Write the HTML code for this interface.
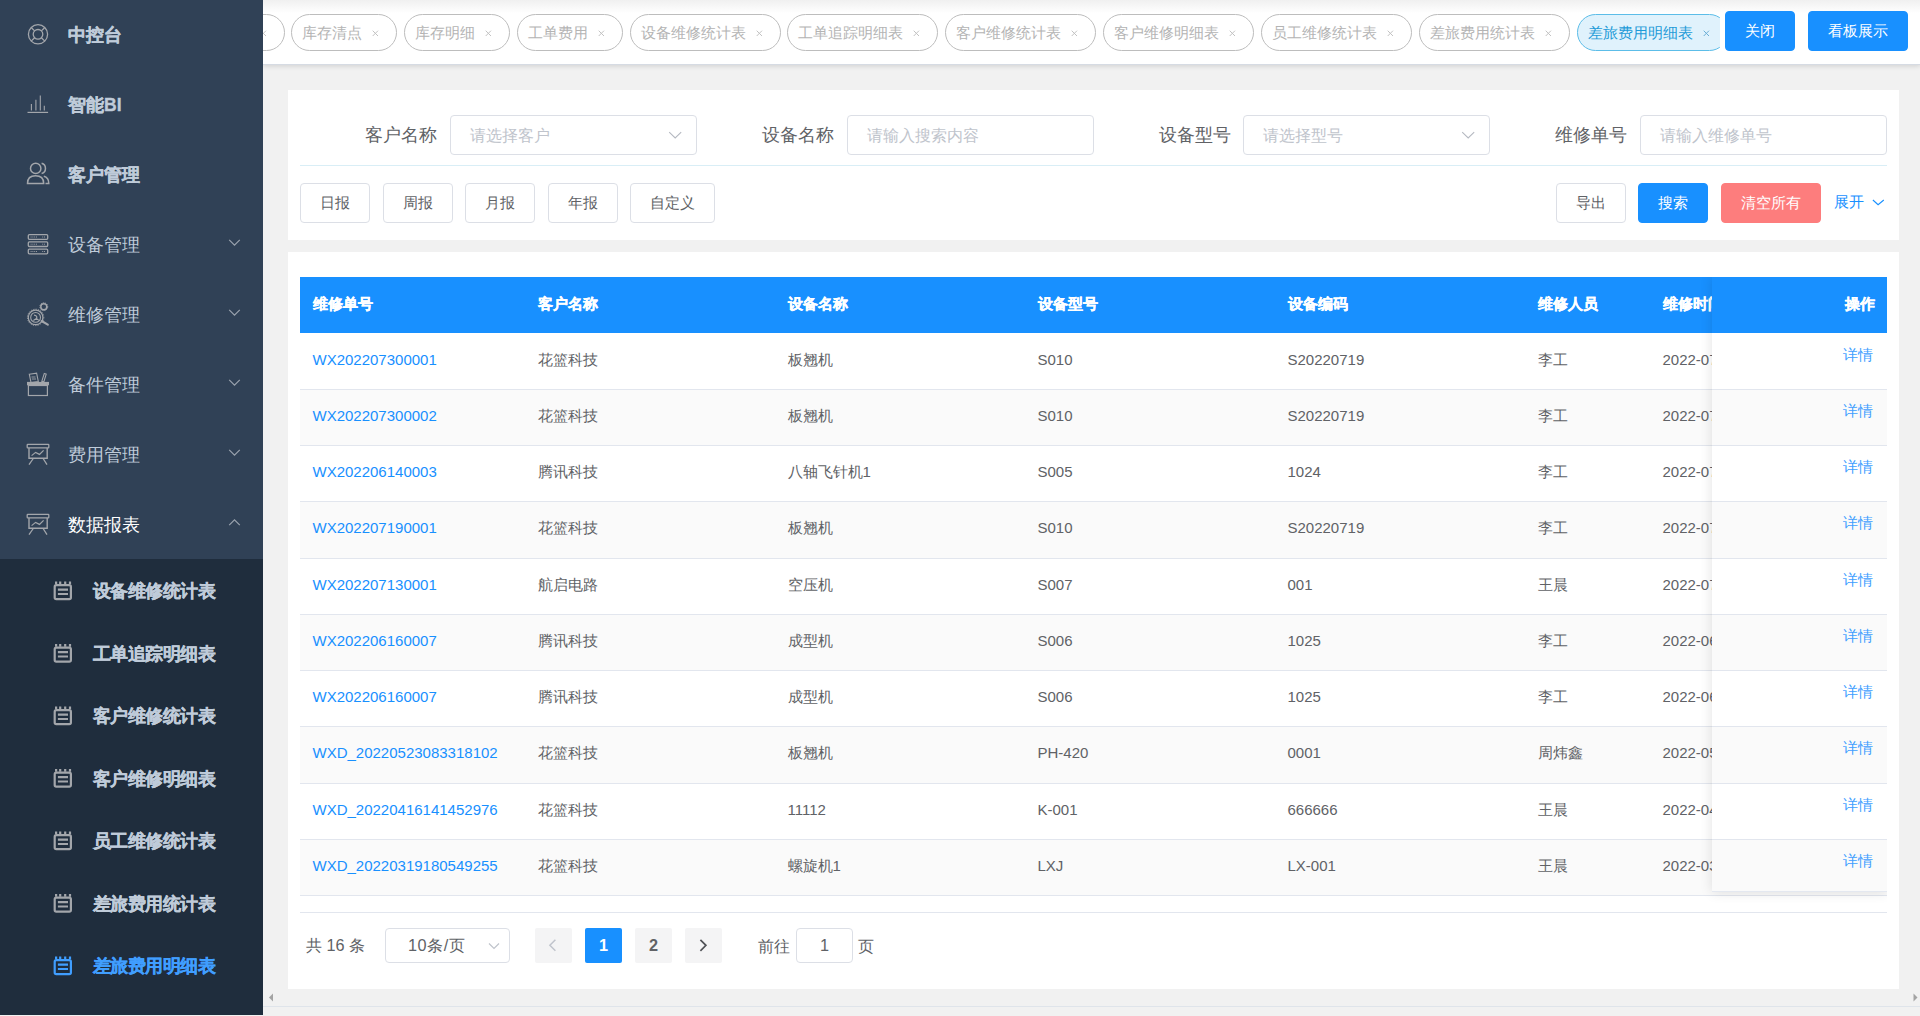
<!DOCTYPE html>
<html><head><meta charset="utf-8">
<style>
*{box-sizing:border-box;margin:0;padding:0}
html,body{width:1920px;height:1016px;overflow:hidden;background:#f1f1f1;font-family:"Liberation Sans",sans-serif;}
.ab{position:absolute;white-space:nowrap}
#side{position:absolute;left:0;top:0;width:263px;height:1015px;background:#304156;overflow:hidden;z-index:5}
.mt{position:absolute;left:68px;font-size:17.5px;color:#bfcbd9;white-space:nowrap;line-height:70px;height:70px}
.st{position:absolute;left:93px;font-size:17.5px;letter-spacing:-0.55px;font-weight:bold;-webkit-text-stroke:0.3px currentColor;color:#bfcbd9;white-space:nowrap;line-height:62.5px;height:62.5px}
#tagbar{position:absolute;left:263px;top:0;width:1657px;height:64px;background:#fff;box-shadow:0 1px 0 #d6dbe3,0 2px 5px rgba(0,0,0,.14);overflow:hidden}
.tag{position:absolute;top:14px;height:37px;border:1px solid #bdbdbd;border-radius:18.5px;font-size:15px;color:#b4b4b4;line-height:35px;white-space:nowrap;background:#fff}
.tag .tx{position:absolute;left:10px;top:0}
.tag .x{position:absolute;right:14px;top:0;font-size:14px}
.btn{position:absolute;border-radius:4px;font-size:15px;text-align:center;border:1px solid #dcdfe6;color:#606266;background:#fff;white-space:nowrap}
.pb{background:#1890ff;border-color:#1890ff;color:#fff}
.panel{position:absolute;background:#fff}
.lbl{position:absolute;font-size:17.5px;color:#606266;line-height:40px;white-space:nowrap}
.inp{position:absolute;height:40px;border:1px solid #dcdfe6;border-radius:4px;background:#fff}
.inp .ph{position:absolute;left:19px;top:0;line-height:38px;font-size:16.25px;color:#c0c4cc;white-space:nowrap}
.th{position:absolute;top:276px;height:56px;line-height:56px;font-size:15px;font-weight:bold;-webkit-text-stroke:0.3px currentColor;color:#fff;white-space:nowrap}
.td{position:absolute;height:56px;line-height:54px;font-size:15px;color:#606266;white-space:nowrap}
.lnk{color:#1890ff}
</style></head><body>

<div id="side">
<div class="mt" style="top:0px;font-weight:bold;-webkit-text-stroke:0.35px currentColor;">中控台</div>
<div class="mt" style="top:70px;font-weight:bold;-webkit-text-stroke:0.35px currentColor;">智能BI</div>
<div class="mt" style="top:140px;font-weight:bold;-webkit-text-stroke:0.35px currentColor;">客户管理</div>
<div class="mt" style="top:210px;">设备管理</div>
<div class="mt" style="top:280px;">维修管理</div>
<div class="mt" style="top:350px;">备件管理</div>
<div class="mt" style="top:420px;">费用管理</div>
<div class="mt" style="top:490px;color:#fff;">数据报表</div>
<div class="ab" style="left:0;top:559px;width:263px;height:456px;background:#1f2d3d"></div>
<div class="st" style="top:560.10px;">设备维修统计表</div>
<div class="st" style="top:622.60px;">工单追踪明细表</div>
<div class="st" style="top:685.10px;">客户维修统计表</div>
<div class="st" style="top:747.60px;">客户维修明细表</div>
<div class="st" style="top:810.10px;">员工维修统计表</div>
<div class="st" style="top:872.60px;">差旅费用统计表</div>
<div class="st" style="top:935.10px;color:#409eff;">差旅费用明细表</div>
<svg class="ab" style="left:0;top:0" width="263" height="1015" viewBox="0 0 263 1015" fill="none" stroke="#a3a6ab"><circle cx="38" cy="34.3" r="9.6" stroke-width="1.3"/><circle cx="38" cy="34.3" r="4.8" stroke-width="1.3"/><path d="M31.2 27.5L34.6 30.9M44.8 27.5L41.4 30.9M31.2 41.1L34.6 37.7M44.8 41.1L41.4 37.7" stroke-width="1.3"/><path d="M31.4 104V110.5M35.9 99.8V110.5M40.3 95.6V110.5M44.3 105.7V110.5" stroke-width="1.1"/><path d="M27.5 112.4H48.1" stroke-width="1.2"/><circle cx="35.7" cy="168.4" r="5.2" stroke-width="1.5"/><path d="M41.6 163.3A5.3 5.3 0 0 1 41.6 173.5" stroke-width="1.5"/><path d="M27.5 183.4C27.5 178.5 30.5 175.8 35.5 175.8C40.5 175.8 43.7 178.5 43.7 183.4Z" stroke-width="1.5"/><path d="M43.8 176.2C47 177 48.8 179.5 48.8 183.4H45.5" stroke-width="1.5"/><rect x="28.3" y="234.7" width="19.4" height="4.6" rx="1" stroke-width="1.3"/><path d="M30.6 237.00H37.6M42.2 237.00H45.2" stroke-width="0.9" stroke-dasharray="1 0.8"/><rect x="28.3" y="241.9" width="19.4" height="4.6" rx="1" stroke-width="1.3"/><path d="M30.6 244.20H37.6M42.2 244.20H45.2" stroke-width="0.9" stroke-dasharray="1 0.8"/><rect x="28.3" y="249.2" width="19.4" height="4.6" rx="1" stroke-width="1.3"/><path d="M30.6 251.50H37.6M42.2 251.50H45.2" stroke-width="0.9" stroke-dasharray="1 0.8"/><circle cx="35.6" cy="317.4" r="7.3" stroke-width="1.2"/><circle cx="35.6" cy="317.4" r="8.2" stroke-width="0.9" stroke-dasharray="1.2 1.2"/><circle cx="35.6" cy="317.4" r="4.9" stroke-width="1.1"/><path d="M34 315.2C36.5 315.5 37.5 317 36.4 318.4L33.4 320.6M36.4 318.4L38.8 320.4" stroke-width="1.2"/><path d="M41.6 321L47.8 324.6" stroke-width="2.1" stroke-linecap="round"/><circle cx="43.8" cy="306.7" r="3.0" stroke-width="1.5"/><circle cx="43.8" cy="306.7" r="3.9" stroke-width="1.0" stroke-dasharray="1.2 0.9"/><rect x="28.4" y="385.5" width="19" height="10" stroke-width="1.2"/><path d="M27 383.6H49" stroke-width="3.4"/><path d="M29.3 374.2L36.6 373.2L38.3 381.5L31 382.5Z" stroke-width="1.1"/><path d="M31.5 377H35.5M31.8 379H36" stroke-width="0.9"/><path d="M44.3 373.4L46.2 374.1L43.8 382L41.8 381.3Z" stroke-width="1.1"/><rect x="27.2" y="444.3" width="21.6" height="3.6" rx="0.6" stroke-width="1.3"/><path d="M29 447.9V458.2H47.2V447.9" stroke-width="1.4"/><path d="M31.6 455.6L35.6 452.4L39.5 454.4L43.6 450.3" stroke-width="1.2"/><path d="M33.3 458.5L29 464.7M43.1 458.5L47 464.7" stroke-width="1.3"/><rect x="27.2" y="514.3" width="21.6" height="3.6" rx="0.6" stroke-width="1.3"/><path d="M29 517.9V528.2H47.2V517.9" stroke-width="1.4"/><path d="M31.6 525.6L35.6 522.4L39.5 524.4L43.6 520.3" stroke-width="1.2"/><path d="M33.3 528.5L29 534.7M43.1 528.5L47 534.7" stroke-width="1.3"/><g stroke="#a3a6ab" transform="translate(53.6 581.30)"><rect x="1.1" y="3.9" width="16.2" height="14" rx="1.6" stroke-width="2.2"/><path d="M2.5 0.2V3M6.6 0.2V3M11.6 0.2V3M16.4 0.2V3" stroke-width="2.2"/><path d="M4.3 8.4H14.4M4.3 12.7H14.4" stroke-width="2.2"/></g><g stroke="#a3a6ab" transform="translate(53.6 643.80)"><rect x="1.1" y="3.9" width="16.2" height="14" rx="1.6" stroke-width="2.2"/><path d="M2.5 0.2V3M6.6 0.2V3M11.6 0.2V3M16.4 0.2V3" stroke-width="2.2"/><path d="M4.3 8.4H14.4M4.3 12.7H14.4" stroke-width="2.2"/></g><g stroke="#a3a6ab" transform="translate(53.6 706.30)"><rect x="1.1" y="3.9" width="16.2" height="14" rx="1.6" stroke-width="2.2"/><path d="M2.5 0.2V3M6.6 0.2V3M11.6 0.2V3M16.4 0.2V3" stroke-width="2.2"/><path d="M4.3 8.4H14.4M4.3 12.7H14.4" stroke-width="2.2"/></g><g stroke="#a3a6ab" transform="translate(53.6 768.80)"><rect x="1.1" y="3.9" width="16.2" height="14" rx="1.6" stroke-width="2.2"/><path d="M2.5 0.2V3M6.6 0.2V3M11.6 0.2V3M16.4 0.2V3" stroke-width="2.2"/><path d="M4.3 8.4H14.4M4.3 12.7H14.4" stroke-width="2.2"/></g><g stroke="#a3a6ab" transform="translate(53.6 831.30)"><rect x="1.1" y="3.9" width="16.2" height="14" rx="1.6" stroke-width="2.2"/><path d="M2.5 0.2V3M6.6 0.2V3M11.6 0.2V3M16.4 0.2V3" stroke-width="2.2"/><path d="M4.3 8.4H14.4M4.3 12.7H14.4" stroke-width="2.2"/></g><g stroke="#a3a6ab" transform="translate(53.6 893.80)"><rect x="1.1" y="3.9" width="16.2" height="14" rx="1.6" stroke-width="2.2"/><path d="M2.5 0.2V3M6.6 0.2V3M11.6 0.2V3M16.4 0.2V3" stroke-width="2.2"/><path d="M4.3 8.4H14.4M4.3 12.7H14.4" stroke-width="2.2"/></g><g stroke="#409eff" transform="translate(53.6 956.30)"><rect x="1.1" y="3.9" width="16.2" height="14" rx="1.6" stroke-width="2.2"/><path d="M2.5 0.2V3M6.6 0.2V3M11.6 0.2V3M16.4 0.2V3" stroke-width="2.2"/><path d="M4.3 8.4H14.4M4.3 12.7H14.4" stroke-width="2.2"/></g><path d="M229.2 239.9L234.5 245.2L239.8 239.9" stroke="#9aa3ae" stroke-width="1.2"/><path d="M229.2 309.9L234.5 315.2L239.8 309.9" stroke="#9aa3ae" stroke-width="1.2"/><path d="M229.2 379.9L234.5 385.2L239.8 379.9" stroke="#9aa3ae" stroke-width="1.2"/><path d="M229.2 449.9L234.5 455.2L239.8 449.9" stroke="#9aa3ae" stroke-width="1.2"/><path d="M229.2 525.2L234.5 519.9L239.8 525.2" stroke="#9aa3ae" stroke-width="1.2"/></svg>
</div>
<div id="tagbar"><div class="ab" style="left:0;top:0;width:1657px;height:13px;background:linear-gradient(#f0f0f0,rgba(255,255,255,0))"></div><div class="ab" style="left:0;top:0;width:1457px;height:64px;overflow:hidden">
<div class="tag" style="left:-84.5px;width:106px"><svg class="ab" style="right:16.5px;top:15px" width="7" height="7" viewBox="0 0 7 7"><path d="M0.7 0.7L6 6M6 0.7L0.7 6" stroke="#c2c2c2" stroke-width="1"/></svg></div>
<div class="tag" style="left:28.0px;width:105.5px;"><span class="tx">库存清点</span><svg class="ab" style="right:16.5px;top:15px" width="7" height="7" viewBox="0 0 7 7"><path d="M0.7 0.7L6 6M6 0.7L0.7 6" stroke="#c2c2c2" stroke-width="1"/></svg></div>
<div class="tag" style="left:141.0px;width:105.5px;"><span class="tx">库存明细</span><svg class="ab" style="right:16.5px;top:15px" width="7" height="7" viewBox="0 0 7 7"><path d="M0.7 0.7L6 6M6 0.7L0.7 6" stroke="#c2c2c2" stroke-width="1"/></svg></div>
<div class="tag" style="left:254.0px;width:105.5px;"><span class="tx">工单费用</span><svg class="ab" style="right:16.5px;top:15px" width="7" height="7" viewBox="0 0 7 7"><path d="M0.7 0.7L6 6M6 0.7L0.7 6" stroke="#c2c2c2" stroke-width="1"/></svg></div>
<div class="tag" style="left:367.0px;width:150.5px;"><span class="tx">设备维修统计表</span><svg class="ab" style="right:16.5px;top:15px" width="7" height="7" viewBox="0 0 7 7"><path d="M0.7 0.7L6 6M6 0.7L0.7 6" stroke="#c2c2c2" stroke-width="1"/></svg></div>
<div class="tag" style="left:524.0px;width:150.5px;"><span class="tx">工单追踪明细表</span><svg class="ab" style="right:16.5px;top:15px" width="7" height="7" viewBox="0 0 7 7"><path d="M0.7 0.7L6 6M6 0.7L0.7 6" stroke="#c2c2c2" stroke-width="1"/></svg></div>
<div class="tag" style="left:682.0px;width:150.5px;"><span class="tx">客户维修统计表</span><svg class="ab" style="right:16.5px;top:15px" width="7" height="7" viewBox="0 0 7 7"><path d="M0.7 0.7L6 6M6 0.7L0.7 6" stroke="#c2c2c2" stroke-width="1"/></svg></div>
<div class="tag" style="left:840.0px;width:150.5px;"><span class="tx">客户维修明细表</span><svg class="ab" style="right:16.5px;top:15px" width="7" height="7" viewBox="0 0 7 7"><path d="M0.7 0.7L6 6M6 0.7L0.7 6" stroke="#c2c2c2" stroke-width="1"/></svg></div>
<div class="tag" style="left:998.0px;width:150.5px;"><span class="tx">员工维修统计表</span><svg class="ab" style="right:16.5px;top:15px" width="7" height="7" viewBox="0 0 7 7"><path d="M0.7 0.7L6 6M6 0.7L0.7 6" stroke="#c2c2c2" stroke-width="1"/></svg></div>
<div class="tag" style="left:1156.0px;width:150.5px;"><span class="tx">差旅费用统计表</span><svg class="ab" style="right:16.5px;top:15px" width="7" height="7" viewBox="0 0 7 7"><path d="M0.7 0.7L6 6M6 0.7L0.7 6" stroke="#c2c2c2" stroke-width="1"/></svg></div>
<div class="tag" style="left:1314.0px;width:150.5px;background:#e0f2fc;border-color:#5cbde8;color:#1e9bd8;"><span class="tx">差旅费用明细表</span><svg class="ab" style="right:16.5px;top:15px" width="7" height="7" viewBox="0 0 7 7"><path d="M0.7 0.7L6 6M6 0.7L0.7 6" stroke="#6aaed6" stroke-width="1"/></svg></div>
</div></div>
<div class="btn pb" style="left:1725px;top:11px;width:70px;height:40px;line-height:38px">关闭</div>
<div class="btn pb" style="left:1808px;top:11px;width:100px;height:40px;line-height:38px">看板展示</div>
<div class="panel" style="left:288px;top:89.5px;width:1611px;height:150.5px"></div>
<div class="lbl" style="left:365.0px;top:115px">客户名称</div>
<div class="inp" style="left:450.0px;top:115px;width:247px"><span class="ph">请选择客户</span><svg class="ab" style="left:217px;top:13.5px" width="14" height="10" viewBox="0 0 14 10"><path d="M1.2 2.2L7.2 8L13.2 2.2" fill="none" stroke="#b4b8c0" stroke-width="1.05"/></svg></div>
<div class="lbl" style="left:762.0px;top:115px">设备名称</div>
<div class="inp" style="left:847.0px;top:115px;width:247px"><span class="ph">请输入搜索内容</span></div>
<div class="lbl" style="left:1158.5px;top:115px">设备型号</div>
<div class="inp" style="left:1243.0px;top:115px;width:247px"><span class="ph">请选择型号</span><svg class="ab" style="left:217px;top:13.5px" width="14" height="10" viewBox="0 0 14 10"><path d="M1.2 2.2L7.2 8L13.2 2.2" fill="none" stroke="#b4b8c0" stroke-width="1.05"/></svg></div>
<div class="lbl" style="left:1555.0px;top:115px">维修单号</div>
<div class="inp" style="left:1640.0px;top:115px;width:247px"><span class="ph">请输入维修单号</span></div>
<div class="ab" style="left:300px;top:165px;width:1587px;height:1px;background:#d9eef6"></div>
<div class="btn" style="left:300px;top:183px;width:70px;height:40px;line-height:38px">日报</div>
<div class="btn" style="left:383px;top:183px;width:70px;height:40px;line-height:38px">周报</div>
<div class="btn" style="left:465px;top:183px;width:70px;height:40px;line-height:38px">月报</div>
<div class="btn" style="left:548px;top:183px;width:70px;height:40px;line-height:38px">年报</div>
<div class="btn" style="left:630px;top:183px;width:85px;height:40px;line-height:38px">自定义</div>
<div class="btn" style="left:1556px;top:183px;width:70px;height:40px;line-height:38px">导出</div>
<div class="btn pb" style="left:1638px;top:183px;width:70px;height:40px;line-height:38px">搜索</div>
<div class="btn" style="left:1721px;top:183px;width:100px;height:40px;line-height:38px;background:#fd7d7d;border-color:#fd7d7d;color:#fff">清空所有</div>
<div class="ab" style="left:1834px;top:182px;line-height:40px;font-size:15px;color:#1890ff">展开</div>
<svg class="ab" style="left:1871px;top:197px" width="14" height="10" viewBox="0 0 14 10"><path d="M1.9 3L7.1 7.7L12.8 3" fill="none" stroke="#1890ff" stroke-width="1.1"/></svg>
<div class="panel" style="left:288px;top:252px;width:1611px;height:737px"></div>
<div class="ab" style="left:300px;top:277px;width:1587px;height:56px;background:#1890ff"></div>
<div class="th" style="left:312.5px">维修单号</div>
<div class="th" style="left:537.5px">客户名称</div>
<div class="th" style="left:787.5px">设备名称</div>
<div class="th" style="left:1037.5px">设备型号</div>
<div class="th" style="left:1287.5px">设备编码</div>
<div class="th" style="left:1537.5px">维修人员</div>
<div class="th" style="left:1662.5px">维修时间</div>
<div class="ab" style="left:300px;top:333px;width:1587px;height:56px;background:#fff"></div>
<div class="td lnk" style="left:312.5px;top:331.80px;line-height:56.25px">WX202207300001</div>
<div class="td" style="left:537.5px;top:331.80px;line-height:56.25px">花篮科技</div>
<div class="td" style="left:787.5px;top:331.80px;line-height:56.25px">板翘机</div>
<div class="td" style="left:1037.5px;top:331.80px;line-height:56.25px">S010</div>
<div class="td" style="left:1287.5px;top:331.80px;line-height:56.25px">S20220719</div>
<div class="td" style="left:1537.5px;top:331.80px;line-height:56.25px">李工</div>
<div class="td" style="left:1662.5px;top:331.80px;line-height:56.25px">2022-07-30</div>
<div class="ab" style="left:300px;top:389px;width:1587px;height:56px;background:#fafafa"></div>
<div class="td lnk" style="left:312.5px;top:387.80px;line-height:56.25px">WX202207300002</div>
<div class="td" style="left:537.5px;top:387.80px;line-height:56.25px">花篮科技</div>
<div class="td" style="left:787.5px;top:387.80px;line-height:56.25px">板翘机</div>
<div class="td" style="left:1037.5px;top:387.80px;line-height:56.25px">S010</div>
<div class="td" style="left:1287.5px;top:387.80px;line-height:56.25px">S20220719</div>
<div class="td" style="left:1537.5px;top:387.80px;line-height:56.25px">李工</div>
<div class="td" style="left:1662.5px;top:387.80px;line-height:56.25px">2022-07-30</div>
<div class="ab" style="left:300px;top:445px;width:1587px;height:57px;background:#fff"></div>
<div class="td lnk" style="left:312.5px;top:443.80px;line-height:56.25px">WX202206140003</div>
<div class="td" style="left:537.5px;top:443.80px;line-height:56.25px">腾讯科技</div>
<div class="td" style="left:787.5px;top:443.80px;line-height:56.25px">八轴飞针机1</div>
<div class="td" style="left:1037.5px;top:443.80px;line-height:56.25px">S005</div>
<div class="td" style="left:1287.5px;top:443.80px;line-height:56.25px">1024</div>
<div class="td" style="left:1537.5px;top:443.80px;line-height:56.25px">李工</div>
<div class="td" style="left:1662.5px;top:443.80px;line-height:56.25px">2022-07-14</div>
<div class="ab" style="left:300px;top:502px;width:1587px;height:56px;background:#fafafa"></div>
<div class="td lnk" style="left:312.5px;top:499.80px;line-height:56.25px">WX202207190001</div>
<div class="td" style="left:537.5px;top:499.80px;line-height:56.25px">花篮科技</div>
<div class="td" style="left:787.5px;top:499.80px;line-height:56.25px">板翘机</div>
<div class="td" style="left:1037.5px;top:499.80px;line-height:56.25px">S010</div>
<div class="td" style="left:1287.5px;top:499.80px;line-height:56.25px">S20220719</div>
<div class="td" style="left:1537.5px;top:499.80px;line-height:56.25px">李工</div>
<div class="td" style="left:1662.5px;top:499.80px;line-height:56.25px">2022-07-19</div>
<div class="ab" style="left:300px;top:558px;width:1587px;height:56px;background:#fff"></div>
<div class="td lnk" style="left:312.5px;top:556.80px;line-height:56.25px">WX202207130001</div>
<div class="td" style="left:537.5px;top:556.80px;line-height:56.25px">航启电路</div>
<div class="td" style="left:787.5px;top:556.80px;line-height:56.25px">空压机</div>
<div class="td" style="left:1037.5px;top:556.80px;line-height:56.25px">S007</div>
<div class="td" style="left:1287.5px;top:556.80px;line-height:56.25px">001</div>
<div class="td" style="left:1537.5px;top:556.80px;line-height:56.25px">王晨</div>
<div class="td" style="left:1662.5px;top:556.80px;line-height:56.25px">2022-07-13</div>
<div class="ab" style="left:300px;top:614px;width:1587px;height:56px;background:#fafafa"></div>
<div class="td lnk" style="left:312.5px;top:612.80px;line-height:56.25px">WX202206160007</div>
<div class="td" style="left:537.5px;top:612.80px;line-height:56.25px">腾讯科技</div>
<div class="td" style="left:787.5px;top:612.80px;line-height:56.25px">成型机</div>
<div class="td" style="left:1037.5px;top:612.80px;line-height:56.25px">S006</div>
<div class="td" style="left:1287.5px;top:612.80px;line-height:56.25px">1025</div>
<div class="td" style="left:1537.5px;top:612.80px;line-height:56.25px">李工</div>
<div class="td" style="left:1662.5px;top:612.80px;line-height:56.25px">2022-06-16</div>
<div class="ab" style="left:300px;top:670px;width:1587px;height:57px;background:#fff"></div>
<div class="td lnk" style="left:312.5px;top:668.80px;line-height:56.25px">WX202206160007</div>
<div class="td" style="left:537.5px;top:668.80px;line-height:56.25px">腾讯科技</div>
<div class="td" style="left:787.5px;top:668.80px;line-height:56.25px">成型机</div>
<div class="td" style="left:1037.5px;top:668.80px;line-height:56.25px">S006</div>
<div class="td" style="left:1287.5px;top:668.80px;line-height:56.25px">1025</div>
<div class="td" style="left:1537.5px;top:668.80px;line-height:56.25px">李工</div>
<div class="td" style="left:1662.5px;top:668.80px;line-height:56.25px">2022-06-16</div>
<div class="ab" style="left:300px;top:727px;width:1587px;height:56px;background:#fafafa"></div>
<div class="td lnk" style="left:312.5px;top:724.80px;line-height:56.25px">WXD_20220523083318102</div>
<div class="td" style="left:537.5px;top:724.80px;line-height:56.25px">花篮科技</div>
<div class="td" style="left:787.5px;top:724.80px;line-height:56.25px">板翘机</div>
<div class="td" style="left:1037.5px;top:724.80px;line-height:56.25px">PH-420</div>
<div class="td" style="left:1287.5px;top:724.80px;line-height:56.25px">0001</div>
<div class="td" style="left:1537.5px;top:724.80px;line-height:56.25px">周炜鑫</div>
<div class="td" style="left:1662.5px;top:724.80px;line-height:56.25px">2022-05-23</div>
<div class="ab" style="left:300px;top:783px;width:1587px;height:56px;background:#fff"></div>
<div class="td lnk" style="left:312.5px;top:781.80px;line-height:56.25px">WXD_20220416141452976</div>
<div class="td" style="left:537.5px;top:781.80px;line-height:56.25px">花篮科技</div>
<div class="td" style="left:787.5px;top:781.80px;line-height:56.25px">11112</div>
<div class="td" style="left:1037.5px;top:781.80px;line-height:56.25px">K-001</div>
<div class="td" style="left:1287.5px;top:781.80px;line-height:56.25px">666666</div>
<div class="td" style="left:1537.5px;top:781.80px;line-height:56.25px">王晨</div>
<div class="td" style="left:1662.5px;top:781.80px;line-height:56.25px">2022-04-16</div>
<div class="ab" style="left:300px;top:839px;width:1587px;height:56px;background:#fafafa"></div>
<div class="td lnk" style="left:312.5px;top:837.80px;line-height:56.25px">WXD_20220319180549255</div>
<div class="td" style="left:537.5px;top:837.80px;line-height:56.25px">花篮科技</div>
<div class="td" style="left:787.5px;top:837.80px;line-height:56.25px">螺旋机1</div>
<div class="td" style="left:1037.5px;top:837.80px;line-height:56.25px">LXJ</div>
<div class="td" style="left:1287.5px;top:837.80px;line-height:56.25px">LX-001</div>
<div class="td" style="left:1537.5px;top:837.80px;line-height:56.25px">王晨</div>
<div class="td" style="left:1662.5px;top:837.80px;line-height:56.25px">2022-03-19</div>
<div class="ab" style="left:300px;top:389px;width:1587px;height:1px;background:#e2e6ee"></div>
<div class="ab" style="left:300px;top:445px;width:1587px;height:1px;background:#e2e6ee"></div>
<div class="ab" style="left:300px;top:501px;width:1587px;height:1px;background:#e2e6ee"></div>
<div class="ab" style="left:300px;top:558px;width:1587px;height:1px;background:#e2e6ee"></div>
<div class="ab" style="left:300px;top:614px;width:1587px;height:1px;background:#e2e6ee"></div>
<div class="ab" style="left:300px;top:670px;width:1587px;height:1px;background:#e2e6ee"></div>
<div class="ab" style="left:300px;top:726px;width:1587px;height:1px;background:#e2e6ee"></div>
<div class="ab" style="left:300px;top:783px;width:1587px;height:1px;background:#e2e6ee"></div>
<div class="ab" style="left:300px;top:839px;width:1587px;height:1px;background:#e2e6ee"></div>
<div class="ab" style="left:300px;top:895px;width:1587px;height:1px;background:#e2e6ee"></div>
<div class="ab" style="left:300px;top:912px;width:1587px;height:1px;background:#e2e6ee"></div>
<div class="ab" style="left:1650px;top:277px;width:237px;height:680px;overflow:hidden"><div class="ab" style="left:62px;top:0;width:175px;height:615px;box-shadow:0 0 12px rgba(0,0,0,.12);overflow:hidden;background:#fff">
<div class="ab" style="left:0;top:0;width:175px;height:56px;background:#1890ff"></div>
<div class="th" style="left:133px;top:-1px">操作</div>
<div class="ab" style="left:0;top:56px;width:175px;height:56px;background:#fff"></div>
<div class="td lnk" style="left:131px;top:49.80px;line-height:56.25px;color:#409eff">详情</div>
<div class="ab" style="left:0;top:112px;width:175px;height:56px;background:#fafafa"></div>
<div class="td lnk" style="left:131px;top:105.80px;line-height:56.25px;color:#409eff">详情</div>
<div class="ab" style="left:0;top:168px;width:175px;height:57px;background:#fff"></div>
<div class="td lnk" style="left:131px;top:161.80px;line-height:56.25px;color:#409eff">详情</div>
<div class="ab" style="left:0;top:225px;width:175px;height:56px;background:#fafafa"></div>
<div class="td lnk" style="left:131px;top:217.80px;line-height:56.25px;color:#409eff">详情</div>
<div class="ab" style="left:0;top:281px;width:175px;height:56px;background:#fff"></div>
<div class="td lnk" style="left:131px;top:274.80px;line-height:56.25px;color:#409eff">详情</div>
<div class="ab" style="left:0;top:337px;width:175px;height:56px;background:#fafafa"></div>
<div class="td lnk" style="left:131px;top:330.80px;line-height:56.25px;color:#409eff">详情</div>
<div class="ab" style="left:0;top:393px;width:175px;height:57px;background:#fff"></div>
<div class="td lnk" style="left:131px;top:386.80px;line-height:56.25px;color:#409eff">详情</div>
<div class="ab" style="left:0;top:450px;width:175px;height:56px;background:#fafafa"></div>
<div class="td lnk" style="left:131px;top:442.80px;line-height:56.25px;color:#409eff">详情</div>
<div class="ab" style="left:0;top:506px;width:175px;height:56px;background:#fff"></div>
<div class="td lnk" style="left:131px;top:499.80px;line-height:56.25px;color:#409eff">详情</div>
<div class="ab" style="left:0;top:562px;width:175px;height:56px;background:#fafafa"></div>
<div class="td lnk" style="left:131px;top:555.80px;line-height:56.25px;color:#409eff">详情</div>
<div class="ab" style="left:0;top:112px;width:175px;height:1px;background:#e2e6ee"></div>
<div class="ab" style="left:0;top:168px;width:175px;height:1px;background:#e2e6ee"></div>
<div class="ab" style="left:0;top:224px;width:175px;height:1px;background:#e2e6ee"></div>
<div class="ab" style="left:0;top:281px;width:175px;height:1px;background:#e2e6ee"></div>
<div class="ab" style="left:0;top:337px;width:175px;height:1px;background:#e2e6ee"></div>
<div class="ab" style="left:0;top:393px;width:175px;height:1px;background:#e2e6ee"></div>
<div class="ab" style="left:0;top:449px;width:175px;height:1px;background:#e2e6ee"></div>
<div class="ab" style="left:0;top:506px;width:175px;height:1px;background:#e2e6ee"></div>
<div class="ab" style="left:0;top:562px;width:175px;height:1px;background:#e2e6ee"></div>
<div class="ab" style="left:0;top:618px;width:175px;height:1px;background:#e2e6ee"></div>
<div class="ab" style="left:0;bottom:0;width:175px;height:1px;background:#e4e8f0"></div>
</div></div>
<div class="ab" style="left:306px;top:928px;line-height:35px;font-size:16.25px;color:#606266">共 16 条</div>
<div class="inp" style="left:385px;top:928px;width:125px;height:35px"><span class="ph" style="left:22px;line-height:33px;color:#606266;letter-spacing:0.55px">10条/页</span><svg class="ab" style="left:101px;top:12px" width="14" height="10" viewBox="0 0 14 10"><path d="M2 2.5L7 7.5L12 2.5" fill="none" stroke="#c0c4cc" stroke-width="1.2"/></svg></div>
<div class="ab" style="left:535px;top:928px;width:37px;height:35px;background:#f4f4f5;border-radius:2px"></div>
<svg class="ab" style="left:546px;top:938px" width="14" height="14" viewBox="0 0 14 14"><path d="M9.4 1.8L3.9 7.3L9.4 12.8" fill="none" stroke="#c0c4cc" stroke-width="1.5"/></svg>
<div class="ab" style="left:585px;top:928px;width:37px;height:35px;background:#1890ff;border-radius:2px;color:#fff;font-weight:bold;font-size:16.25px;line-height:35px;text-align:center">1</div>
<div class="ab" style="left:635px;top:928px;width:37px;height:35px;background:#f4f4f5;border-radius:2px;color:#606266;font-weight:bold;font-size:16.25px;line-height:35px;text-align:center">2</div>
<div class="ab" style="left:685px;top:928px;width:37px;height:35px;background:#f4f4f5;border-radius:2px"></div>
<svg class="ab" style="left:696px;top:938px" width="14" height="14" viewBox="0 0 14 14"><path d="M4.4 1.8L9.9 7.3L4.4 12.8" fill="none" stroke="#505257" stroke-width="1.7"/></svg>
<div class="ab" style="left:758px;top:929px;line-height:35px;font-size:16.25px;color:#606266">前往</div>
<div class="inp" style="left:796px;top:928px;width:57px;height:35px;text-align:center;line-height:33px;font-size:16.25px;color:#606266">1</div>
<div class="ab" style="left:858px;top:929px;line-height:35px;font-size:16.25px;color:#606266">页</div>
<div class="ab" style="left:263px;top:1006px;width:1657px;height:1px;background:#dfe4ea"></div>
<svg class="ab" style="left:263px;top:990px" width="1657" height="16" viewBox="0 0 1657 16"><path d="M6 7.5L10 3.5V11.5Z" fill="#a3a3a3"/><path d="M1654.5 7.5L1650.5 3.5V11.5Z" fill="#a3a3a3"/></svg>
</body></html>
